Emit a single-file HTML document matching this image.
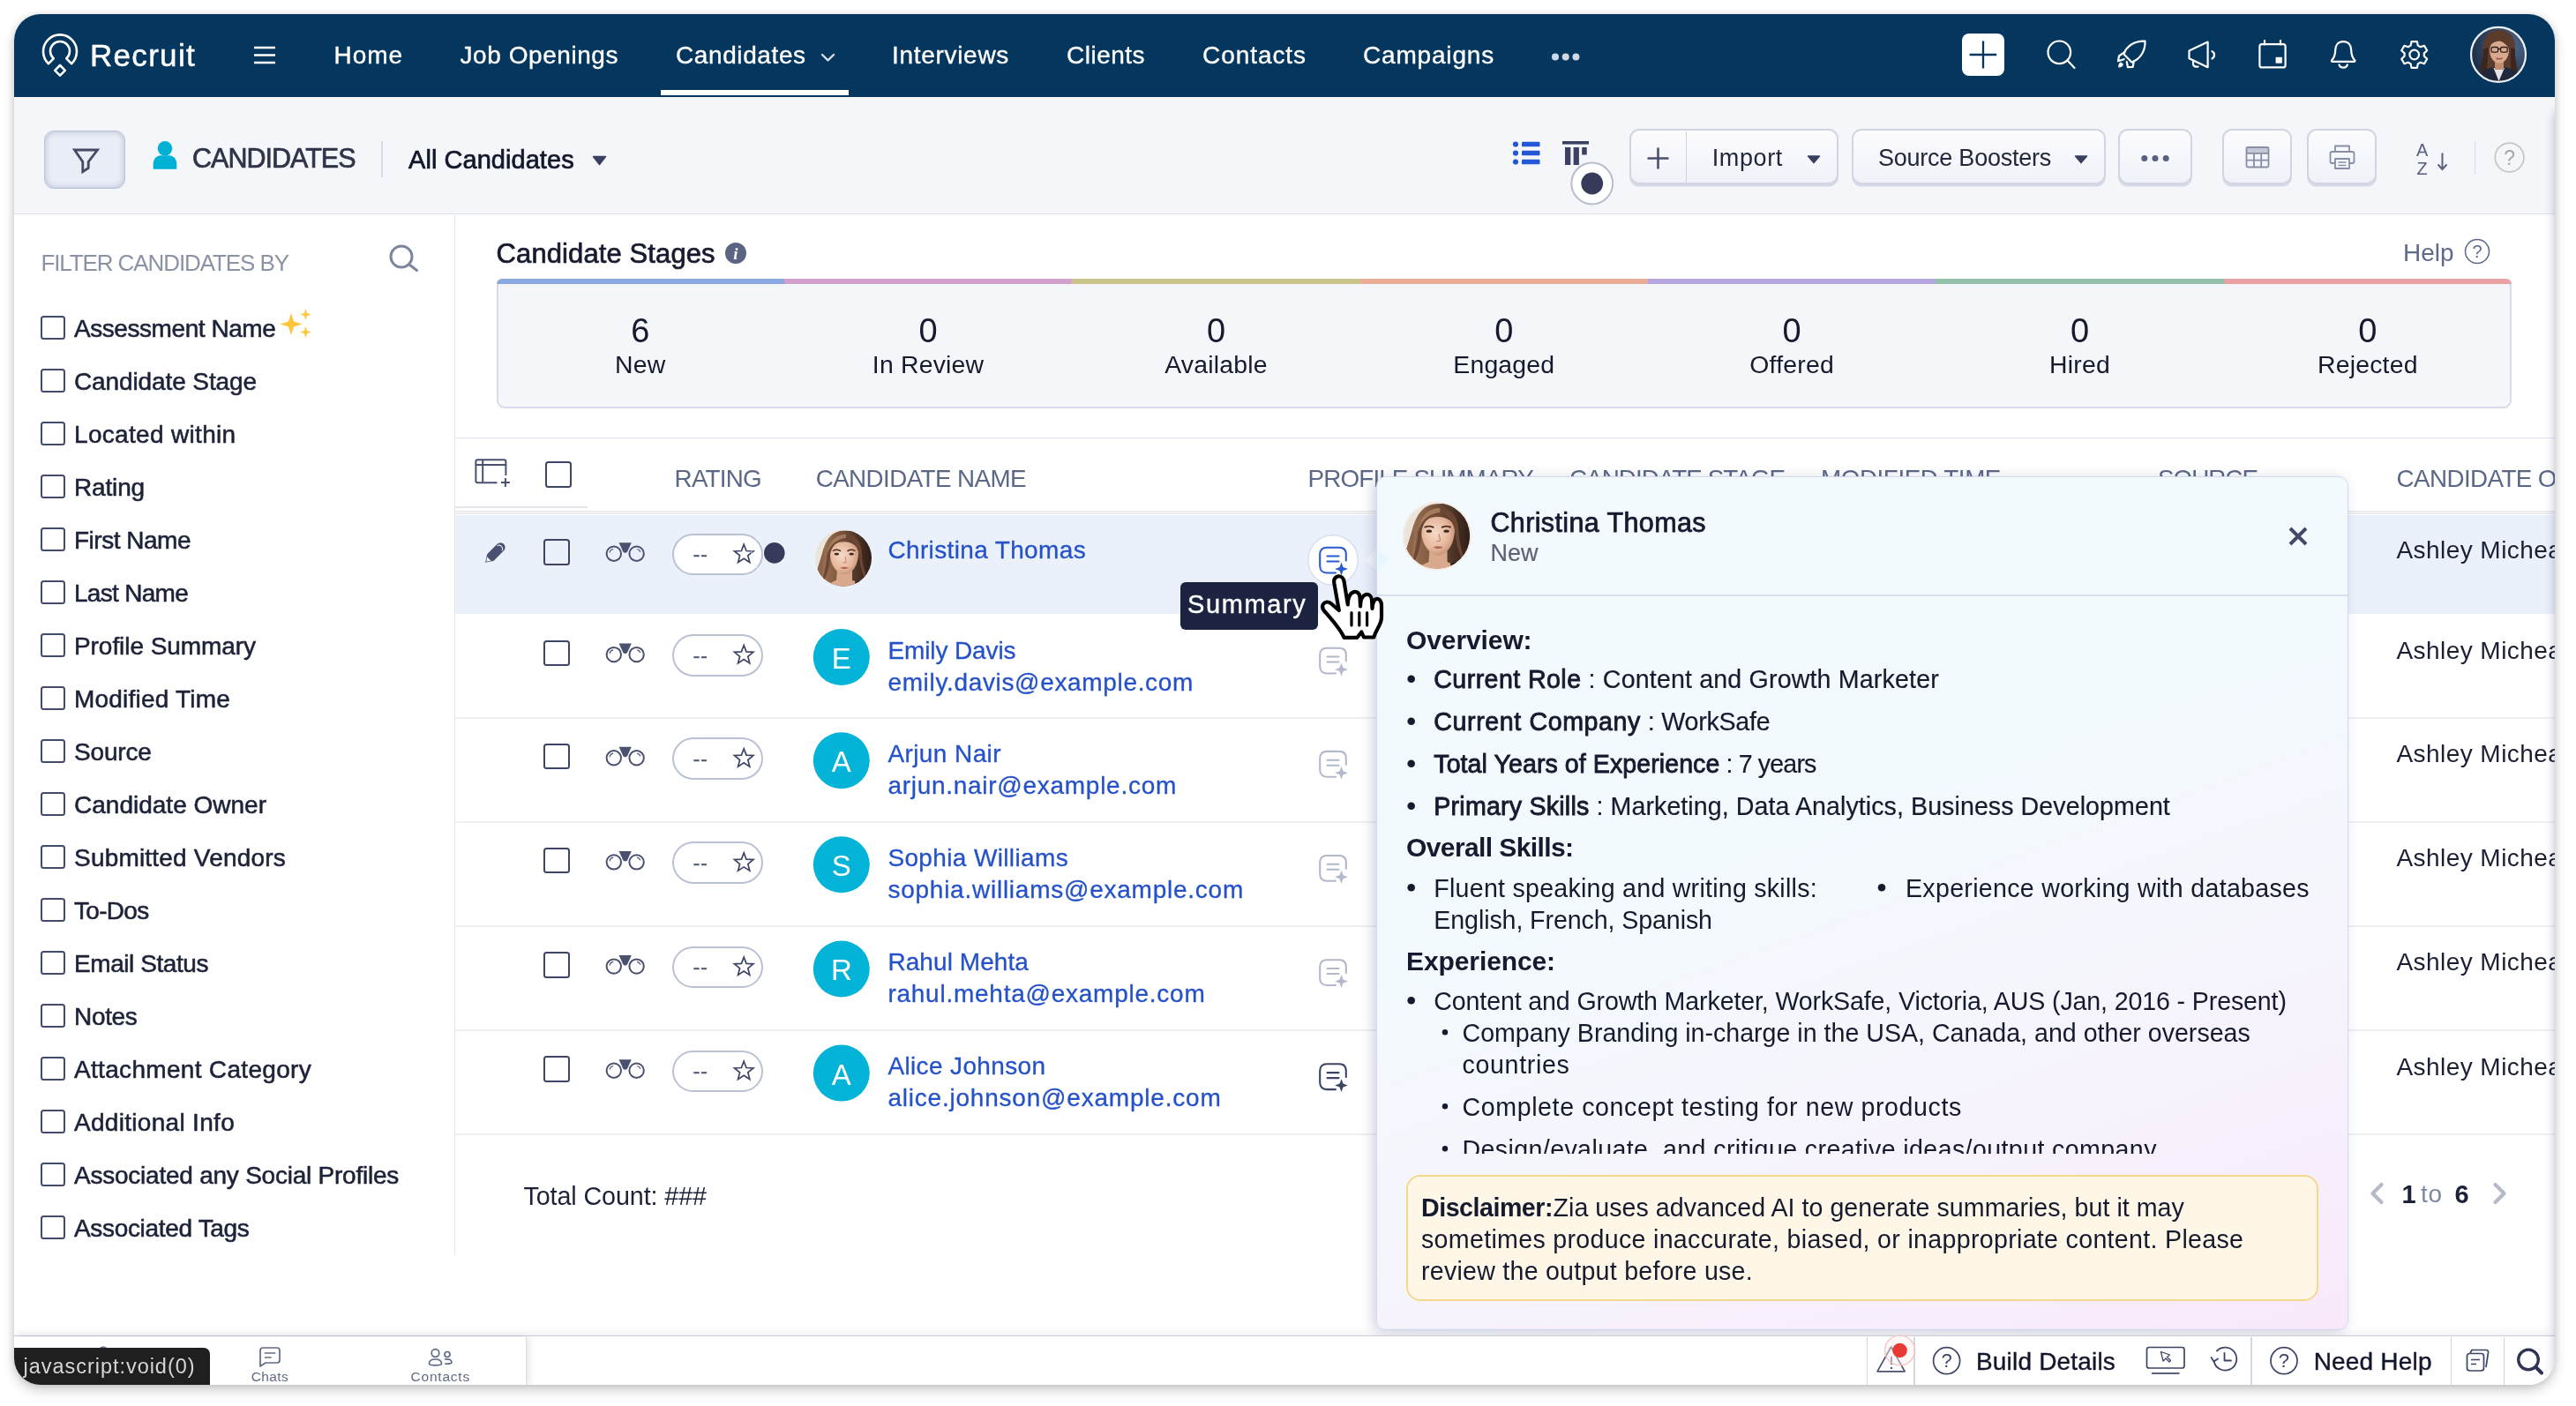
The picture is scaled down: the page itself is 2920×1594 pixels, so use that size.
<!DOCTYPE html>
<html lang="en"><head><meta charset="utf-8"><title>Recruit - Candidates</title>
<style>
html,body{margin:0;padding:0;background:#fff;}
body{width:2920px;height:1594px;overflow:hidden;position:relative;font-family:"Liberation Sans", sans-serif;}
#win{position:absolute;left:16px;top:16px;width:2880px;height:1554px;border-radius:30px;overflow:hidden;background:#fff;}
#shadow{position:absolute;left:16px;top:16px;width:2880px;height:1554px;border-radius:30px;box-shadow:0 6px 14px rgba(0,0,0,.20),0 0 7px rgba(0,0,0,.10);}
#in{position:absolute;left:-16px;top:-16px;width:2920px;height:1594px;will-change:transform;}
div{box-sizing:border-box;}
</style></head>
<body>
<div id="shadow"></div>
<div id="win"><div id="in">
<!-- p_nav -->
<div style="position:absolute;left:16.0px;top:16.0px;width:2880.0px;height:94.0px;box-sizing:border-box;background:#05375e;"></div>
<svg style="position:absolute;left:0;top:0;overflow:visible;pointer-events:none;" width="2920" height="1594" viewBox="0 0 2920 1594">
<g fill="none" stroke="#fff" stroke-width="2.6" stroke-linejoin="round" stroke-linecap="round">
<path d="M55 72.2 A19 19 0 1 1 81 72.2 L75.3 66.3 A11 11 0 1 0 60.7 66.3 Z"/>
<path d="M68 74 L73.8 79.8 L68 85.6 L62.2 79.8 Z"/>
</g></svg>
<div style="position:absolute;top:40.6px;line-height:44px;font-size:35px;color:#ffffff;white-space:pre;left:102.0px;letter-spacing:1.305px;-webkit-text-stroke:0.5px #ffffff;">Recruit</div>
<svg style="position:absolute;left:0;top:0;overflow:visible;pointer-events:none;" width="2920" height="1594" viewBox="0 0 2920 1594"><g stroke="#fff" stroke-width="2.6"><path d="M288 54H312M288 62.5H312M288 71H312"/></g></svg>
<div style="position:absolute;top:44.9px;line-height:35px;font-size:28px;color:#ffffff;white-space:pre;left:378.6px;letter-spacing:0.928px;-webkit-text-stroke:0.35px #ffffff;">Home</div>
<div style="position:absolute;top:44.9px;line-height:35px;font-size:28px;color:#ffffff;white-space:pre;left:521.5px;letter-spacing:0.560px;-webkit-text-stroke:0.35px #ffffff;">Job Openings</div>
<div style="position:absolute;top:44.9px;line-height:35px;font-size:28px;color:#ffffff;white-space:pre;left:766.0px;letter-spacing:0.605px;-webkit-text-stroke:0.35px #ffffff;">Candidates</div>
<div style="position:absolute;top:44.9px;line-height:35px;font-size:28px;color:#ffffff;white-space:pre;left:1011.0px;letter-spacing:0.696px;-webkit-text-stroke:0.35px #ffffff;">Interviews</div>
<div style="position:absolute;top:44.9px;line-height:35px;font-size:28px;color:#ffffff;white-space:pre;left:1209.0px;letter-spacing:0.488px;-webkit-text-stroke:0.35px #ffffff;">Clients</div>
<div style="position:absolute;top:44.9px;line-height:35px;font-size:28px;color:#ffffff;white-space:pre;left:1363.0px;letter-spacing:0.938px;-webkit-text-stroke:0.35px #ffffff;">Contacts</div>
<div style="position:absolute;top:44.9px;line-height:35px;font-size:28px;color:#ffffff;white-space:pre;left:1545.0px;letter-spacing:0.819px;-webkit-text-stroke:0.35px #ffffff;">Campaigns</div>
<svg style="position:absolute;left:0;top:0;overflow:visible;pointer-events:none;" width="2920" height="1594" viewBox="0 0 2920 1594"><path d="M932 62 L938.5 68.3 L945 62" fill="none" stroke="#d9e0ea" stroke-width="2.4" stroke-linecap="round" stroke-linejoin="round"/></svg>
<div style="position:absolute;left:749.0px;top:102.0px;width:213.0px;height:5.5px;box-sizing:border-box;background:#fff;"></div>
<svg style="position:absolute;left:0;top:0;overflow:visible;pointer-events:none;" width="2920" height="1594" viewBox="0 0 2920 1594"><g fill="#cfd8e6"><circle cx="1763" cy="64.5" r="4"/><circle cx="1774.7" cy="64.5" r="4"/><circle cx="1786.4" cy="64.5" r="4"/></g></svg>
<div style="position:absolute;left:2224.0px;top:38.0px;width:48.0px;height:47.8px;box-sizing:border-box;background:#fff;border-radius:8px;"></div>
<svg style="position:absolute;left:0;top:0;overflow:visible;pointer-events:none;" width="2920" height="1594" viewBox="0 0 2920 1594"><path d="M2232.6 62H2263.2M2248 46.6V77.6" stroke="#05375e" stroke-width="2.3"/></svg>
<svg style="position:absolute;left:0;top:0;overflow:visible;pointer-events:none;" width="2920" height="1594" viewBox="0 0 2920 1594"><g fill="none" stroke="#fff" stroke-width="2.2" stroke-linecap="round"><circle cx="2334.3" cy="59.3" r="12.8"/><path d="M2343.5 68.5 L2351.5 77"/></g></svg>
<svg style="position:absolute;left:0;top:0;overflow:visible;pointer-events:none;" width="2920" height="1594" viewBox="0 0 2920 1594"><g fill="none" stroke="#fff" stroke-width="2.2" stroke-linejoin="round" stroke-linecap="round">
<path d="M2431.5 46.6 C2420.5 46 2411 51.5 2407.3 61.2 L2416.3 70.6 C2426 67 2432 58 2431.5 46.6 Z"/>
<path d="M2408.5 58.8 L2402 63.5 L2401 69.3 L2407.6 67.2"/>
<path d="M2418.8 69.5 L2417.6 76 L2412 76.2 L2410.8 70.2"/>
<path d="M2404.8 71.2 C2402.6 71.6 2401.8 73.5 2401.8 75.8 C2404 75.8 2405.8 75 2406.3 72.8" fill="#fff" stroke-width="1.2"/>
</g></svg>
<svg style="position:absolute;left:0;top:0;overflow:visible;pointer-events:none;" width="2920" height="1594" viewBox="0 0 2920 1594"><g fill="none" stroke="#fff" stroke-width="2.2" stroke-linejoin="round" stroke-linecap="round">
<path d="M2481.5 57.5 L2502.6 47.6 V76.2 L2481.5 66.3 Z"/>
<path d="M2486 68.6 V72 Q2486 75.6 2489.5 75.6 H2491.5"/>
<path d="M2507.5 58.2 A4.6 4.6 0 0 1 2507.5 66.4"/>
</g></svg>
<svg style="position:absolute;left:0;top:0;overflow:visible;pointer-events:none;" width="2920" height="1594" viewBox="0 0 2920 1594"><g><rect x="2561.4" y="50.2" width="29.2" height="26.2" rx="2.5" fill="none" stroke="#fff" stroke-width="2.2"/>
<path d="M2567 46.2V50.5M2585 46.2V50.5" stroke="#fff" stroke-width="2.2" stroke-linecap="round"/>
<rect x="2579.6" y="64.8" width="7.2" height="6.9" fill="#fff"/></g></svg>
<svg style="position:absolute;left:0;top:0;overflow:visible;pointer-events:none;" width="2920" height="1594" viewBox="0 0 2920 1594"><g fill="none" stroke="#fff" stroke-width="2.2" stroke-linejoin="round" stroke-linecap="round">
<path d="M2656.2 47.2 C2649.5 47.2 2647.2 52.5 2647.2 57 C2647.2 62.5 2646 65.2 2643 68.6 Q2642.6 69.8 2644 69.8 H2668.4 Q2669.8 69.8 2669.4 68.6 C2666.4 65.2 2665.2 62.5 2665.2 57 C2665.2 52.5 2662.9 47.2 2656.2 47.2 Z"/>
<path d="M2651.6 73.4 C2652.6 77.6 2659.8 77.6 2660.8 73.4"/>
</g></svg>
<svg style="position:absolute;left:0;top:0;overflow:visible;pointer-events:none;" width="2920" height="1594" viewBox="0 0 2920 1594"><path d="M2733.5 47.1 L2739.9 47.1 L2740.8 51.6 L2743.7 53.2 L2748.0 51.8 L2751.2 57.3 L2747.8 60.4 L2747.8 63.6 L2751.2 66.7 L2748.0 72.2 L2743.7 70.8 L2740.8 72.4 L2739.9 76.9 L2733.5 76.9 L2732.6 72.4 L2729.7 70.8 L2725.4 72.2 L2722.2 66.7 L2725.6 63.6 L2725.6 60.4 L2722.2 57.3 L2725.4 51.8 L2729.7 53.2 L2732.6 51.6Z" fill="none" stroke="#fff" stroke-width="2.2" stroke-linejoin="round"/><circle cx="2736.7" cy="62" r="5.3" fill="none" stroke="#fff" stroke-width="2.2"/></svg>
<svg style="position:absolute;left:0;top:0;overflow:visible;pointer-events:none;" width="2920" height="1594" viewBox="0 0 2920 1594"><defs><clipPath id="cpn"><circle cx="2832" cy="61.8" r="30.3"/></clipPath>
<radialGradient id="navbg" cx="70%" cy="35%" r="70%"><stop offset="0" stop-color="#4b6a8e"/><stop offset="1" stop-color="#1d2c44"/></radialGradient></defs>
<g clip-path="url(#cpn)">
<rect x="2799" y="29" width="66" height="66" fill="url(#navbg)"/>
<path d="M2833 34 C2820 34 2814 44 2815 56 C2815.5 66 2810 74 2812 88 L2824 92 L2842 92 L2853 88 C2855 76 2850 68 2851 56 C2852 44 2846 34 2833 34Z" fill="#5a3b2c"/>
<path d="M2815 56 C2815.5 66 2810 74 2812 88 L2820 90 C2818 78 2821 66 2820 54Z" fill="#3c261d"/>
<path d="M2851 56 C2850 68 2855 76 2853 88 L2846 90 C2847 78 2845 66 2846 54Z" fill="#3c261d"/>
<path d="M2806 96 C2807 82 2818 78 2827 76 L2839 76 C2848 78 2859 82 2860 96 Z" fill="#1f283d"/>
<path d="M2826.5 77 L2832.5 92 L2839 77 Z" fill="#e6e4e6"/>
<rect x="2828" y="68" width="10" height="11" fill="#c08c70"/>
<ellipse cx="2833" cy="57.5" rx="10.8" ry="14.2" fill="#d9a98e"/>
<path d="M2821.5 54 C2822 42 2832 41 2836 43 C2842 44 2845 50 2844.5 56 C2841 50 2837 47 2833 46.5 C2828 47 2824 49 2821.5 54Z" fill="#5a3b2c"/>
<g fill="none" stroke="#2a1f1f" stroke-width="1.3"><rect x="2824" y="53.5" width="7.6" height="5.6" rx="1.6"/><rect x="2834.6" y="53.5" width="7.6" height="5.6" rx="1.6"/><path d="M2831.6 55.5H2834.6"/></g>
<path d="M2829.5 66 Q2833 67.6 2836.5 66" stroke="#a0564f" stroke-width="1.4" fill="none"/>
</g>
<circle cx="2832" cy="61.8" r="31" fill="none" stroke="#eef2f6" stroke-width="2.2"/></svg>
<!-- p_toolbar -->
<div style="position:absolute;left:16.0px;top:110.0px;width:2880.0px;height:133.0px;box-sizing:border-box;background:#f5f6fa;border-bottom:1.6px solid #dde2ee;"></div>
<div style="position:absolute;left:50.0px;top:148.0px;width:92.0px;height:66.0px;box-sizing:border-box;background:#e9edf6;border:1.5px solid #b9c2d6;border-radius:11px;box-shadow:inset 0 0 7px rgba(110,125,160,.45);"></div>
<svg style="position:absolute;left:0;top:0;overflow:visible;pointer-events:none;" width="2920" height="1594" viewBox="0 0 2920 1594"><path d="M84.5 170 H110.5 L100.2 183.5 V190.5 L93.8 194.6 V183.5 Z" fill="none" stroke="#444a66" stroke-width="2.8" stroke-linejoin="miter"/></svg>
<svg style="position:absolute;left:0;top:0;overflow:visible;pointer-events:none;" width="2920" height="1594" viewBox="0 0 2920 1594"><g fill="#00b1d6"><circle cx="187" cy="168.3" r="8.3"/><path d="M173.7 191.7 V186 C173.7 180 178 176.3 182 176.3 H192 C196 176.3 200.3 180 200.3 186 V191.7 Q200.3 191.7 198.8 191.7 H175.2 Q173.7 191.7 173.7 191.7 Z"/></g></svg>
<div style="position:absolute;top:160.3px;line-height:38px;font-size:30.5px;color:#2f3449;white-space:pre;left:218.0px;letter-spacing:-0.982px;-webkit-text-stroke:0.7px #2f3449;">CANDIDATES</div>
<div style="position:absolute;left:432.0px;top:160.0px;width:1.6px;height:41.0px;box-sizing:border-box;background:#d9dce6;"></div>
<div style="position:absolute;top:163.3px;line-height:36px;font-size:29px;color:#13172b;white-space:pre;left:463.0px;letter-spacing:0.050px;-webkit-text-stroke:0.7px #13172b;">All Candidates</div>
<svg style="position:absolute;left:0;top:0;overflow:visible;pointer-events:none;" width="2920" height="1594" viewBox="0 0 2920 1594"><path d="M672.5 177.5 L686.5 177.5 L679.5 186.5 Z" fill="#3a4060" stroke="#3a4060" stroke-width="1.5" stroke-linejoin="round"/></svg>
<svg style="position:absolute;left:0;top:0;overflow:visible;pointer-events:none;" width="2920" height="1594" viewBox="0 0 2920 1594"><g fill="#2457d6"><circle cx="1718" cy="163.5" r="3.1"/><rect x="1725" y="160.7" width="20.5" height="5.6" rx="1"/><circle cx="1718" cy="173.5" r="3.1"/><rect x="1725" y="170.7" width="20.5" height="5.6" rx="1"/><circle cx="1718" cy="183.5" r="3.1"/><rect x="1725" y="180.7" width="20.5" height="5.6" rx="1"/></g></svg>
<svg style="position:absolute;left:0;top:0;overflow:visible;pointer-events:none;" width="2920" height="1594" viewBox="0 0 2920 1594"><g fill="#3b4162"><rect x="1771" y="160" width="30" height="3.6"/><rect x="1774" y="167" width="6.3" height="20" /><rect x="1783.6" y="167" width="6.3" height="20"/><rect x="1793.2" y="167" width="5.5" height="8.5"/></g></svg>
<svg style="position:absolute;left:0;top:0;overflow:visible;pointer-events:none;" width="2920" height="1594" viewBox="0 0 2920 1594"><circle cx="1804.7" cy="208" r="23.4" fill="#fff" stroke="#b9bdcc" stroke-width="2"/><circle cx="1804.7" cy="208" r="12.4" fill="#363b5c"/></svg>
<div style="position:absolute;left:1847.0px;top:146.4px;width:237.0px;height:63.1px;box-sizing:border-box;background:linear-gradient(#fcfcfe,#f0f2f9);border:2px solid #d0d5e3;border-radius:11px;box-shadow:0 2.5px 0 #d5d9e6;"></div>
<div style="position:absolute;left:1910.5px;top:148.5px;width:1.5px;height:60.0px;box-sizing:border-box;background:#cdd3e2;"></div>
<svg style="position:absolute;left:0;top:0;overflow:visible;pointer-events:none;" width="2920" height="1594" viewBox="0 0 2920 1594"><path d="M1867.5 179.5H1891.5M1879.5 167.5V191.5" stroke="#4a5070" stroke-width="2.6"/></svg>
<div style="position:absolute;top:161.8px;line-height:34px;font-size:27px;color:#22273b;white-space:pre;left:1940.7px;letter-spacing:0.631px;">Import</div>
<svg style="position:absolute;left:0;top:0;overflow:visible;pointer-events:none;" width="2920" height="1594" viewBox="0 0 2920 1594"><path d="M2049.5 177 L2062.5 177 L2056.0 184.6 Z" fill="#3a4060" stroke="#3a4060" stroke-width="1.5" stroke-linejoin="round"/></svg>
<div style="position:absolute;left:2098.7px;top:146.4px;width:288.3px;height:63.1px;box-sizing:border-box;background:linear-gradient(#fcfcfe,#f0f2f9);border:2px solid #d0d5e3;border-radius:11px;box-shadow:0 2.5px 0 #d5d9e6;"></div>
<div style="position:absolute;top:161.8px;line-height:34px;font-size:27px;color:#22273b;white-space:pre;left:2129.0px;letter-spacing:-0.240px;">Source Boosters</div>
<svg style="position:absolute;left:0;top:0;overflow:visible;pointer-events:none;" width="2920" height="1594" viewBox="0 0 2920 1594"><path d="M2352.5 177 L2365.5 177 L2359.0 184.6 Z" fill="#3a4060" stroke="#3a4060" stroke-width="1.5" stroke-linejoin="round"/></svg>
<div style="position:absolute;left:2401.0px;top:146.4px;width:83.7px;height:63.1px;box-sizing:border-box;background:linear-gradient(#fcfcfe,#f0f2f9);border:2px solid #d0d5e3;border-radius:11px;box-shadow:0 2.5px 0 #d5d9e6;"></div>
<svg style="position:absolute;left:0;top:0;overflow:visible;pointer-events:none;" width="2920" height="1594" viewBox="0 0 2920 1594"><g fill="#596080"><circle cx="2430.8" cy="179.5" r="3.5"/><circle cx="2443" cy="179.5" r="3.5"/><circle cx="2455.2" cy="179.5" r="3.5"/></g></svg>
<div style="position:absolute;left:2519.0px;top:146.4px;width:79.0px;height:63.1px;box-sizing:border-box;background:linear-gradient(#fcfcfe,#f0f2f9);border:2px solid #d0d5e3;border-radius:11px;box-shadow:0 2.5px 0 #d5d9e6;"></div>
<svg style="position:absolute;left:0;top:0;overflow:visible;pointer-events:none;" width="2920" height="1594" viewBox="0 0 2920 1594"><g fill="none" stroke="#878ea6" stroke-width="1.8"><rect x="2546.5" y="167" width="25" height="22.5" rx="1.5"/><path d="M2546.5 173.8H2571.5M2546.5 181.6H2571.5M2555 173.8V189.5M2563.2 173.8V189.5"/></g><rect x="2546.5" y="167" width="25" height="6" fill="#878ea6" fill-opacity=".45"/></svg>
<div style="position:absolute;left:2615.0px;top:146.4px;width:79.0px;height:63.1px;box-sizing:border-box;background:linear-gradient(#fcfcfe,#f0f2f9);border:2px solid #d0d5e3;border-radius:11px;box-shadow:0 2.5px 0 #d5d9e6;"></div>
<svg style="position:absolute;left:0;top:0;overflow:visible;pointer-events:none;" width="2920" height="1594" viewBox="0 0 2920 1594"><g fill="none" stroke="#878ea6" stroke-width="1.8" stroke-linejoin="round"><path d="M2647 172 V165.5 H2663 V172"/><rect x="2641.5" y="172" width="27" height="13" rx="2"/><rect x="2647" y="180" width="16" height="11" fill="#f6f7fb"/><path d="M2650.5 184H2659.5M2650.5 187.5H2659.5" stroke-width="1.5"/></g></svg>
<div style="position:absolute;top:157.5px;line-height:25px;font-size:20px;color:#596080;white-space:pre;left:2739.0px;">A</div>
<div style="position:absolute;top:178.5px;line-height:25px;font-size:20px;color:#596080;white-space:pre;left:2739.5px;">Z</div>
<svg style="position:absolute;left:0;top:0;overflow:visible;pointer-events:none;" width="2920" height="1594" viewBox="0 0 2920 1594"><path d="M2768.5 173.5V191.5M2763.5 186.5L2768.5 192L2773.5 186.5" fill="none" stroke="#596080" stroke-width="2"/></svg>
<div style="position:absolute;left:2804.5px;top:160.4px;width:1.5px;height:38.0px;box-sizing:border-box;background:#d9dce6;"></div>
<svg style="position:absolute;left:0;top:0;overflow:visible;pointer-events:none;" width="2920" height="1594" viewBox="0 0 2920 1594"><circle cx="2844.6" cy="178.5" r="16.3" fill="none" stroke="#c6c6ca" stroke-width="1.7"/></svg>
<div style="position:absolute;top:164.5px;line-height:29px;font-size:23px;color:#a6a6ab;white-space:pre;left:2838.2px;">?</div>
<!-- p_left -->
<div style="position:absolute;left:514.5px;top:243.0px;width:1.5px;height:1180.0px;box-sizing:border-box;background:#e3e6ed;"></div>
<div style="position:absolute;top:281.5px;line-height:32px;font-size:26px;color:#8a92a6;white-space:pre;left:46.4px;letter-spacing:-1.091px;">FILTER CANDIDATES BY</div>
<svg style="position:absolute;left:0;top:0;overflow:visible;pointer-events:none;" width="2920" height="1594" viewBox="0 0 2920 1594"><g fill="none" stroke="#7d869c" stroke-width="3" stroke-linecap="round"><circle cx="455" cy="291" r="12"/><path d="M464 300 L472.5 306.5"/></g></svg>
<div style="position:absolute;left:46.4px;top:357.7px;width:27.6px;height:27.6px;box-sizing:border-box;border:2px solid #434b6c;border-radius:3.5px;background:#fff;"></div>
<div style="position:absolute;top:354.6px;line-height:35px;font-size:28px;color:#1c2238;white-space:pre;left:84.0px;letter-spacing:-0.438px;-webkit-text-stroke:0.55px #1c2238;">Assessment Name</div>
<div style="position:absolute;left:46.4px;top:417.7px;width:27.6px;height:27.6px;box-sizing:border-box;border:2px solid #434b6c;border-radius:3.5px;background:#fff;"></div>
<div style="position:absolute;top:414.6px;line-height:35px;font-size:28px;color:#1c2238;white-space:pre;left:84.0px;letter-spacing:-0.107px;-webkit-text-stroke:0.55px #1c2238;">Candidate Stage</div>
<div style="position:absolute;left:46.4px;top:477.7px;width:27.6px;height:27.6px;box-sizing:border-box;border:2px solid #434b6c;border-radius:3.5px;background:#fff;"></div>
<div style="position:absolute;top:474.6px;line-height:35px;font-size:28px;color:#1c2238;white-space:pre;left:84.0px;letter-spacing:0.321px;-webkit-text-stroke:0.55px #1c2238;">Located within</div>
<div style="position:absolute;left:46.4px;top:537.7px;width:27.6px;height:27.6px;box-sizing:border-box;border:2px solid #434b6c;border-radius:3.5px;background:#fff;"></div>
<div style="position:absolute;top:534.6px;line-height:35px;font-size:28px;color:#1c2238;white-space:pre;left:84.0px;letter-spacing:-0.156px;-webkit-text-stroke:0.55px #1c2238;">Rating</div>
<div style="position:absolute;left:46.4px;top:597.7px;width:27.6px;height:27.6px;box-sizing:border-box;border:2px solid #434b6c;border-radius:3.5px;background:#fff;"></div>
<div style="position:absolute;top:594.6px;line-height:35px;font-size:28px;color:#1c2238;white-space:pre;left:84.0px;letter-spacing:-0.490px;-webkit-text-stroke:0.55px #1c2238;">First Name</div>
<div style="position:absolute;left:46.4px;top:657.7px;width:27.6px;height:27.6px;box-sizing:border-box;border:2px solid #434b6c;border-radius:3.5px;background:#fff;"></div>
<div style="position:absolute;top:654.6px;line-height:35px;font-size:28px;color:#1c2238;white-space:pre;left:84.0px;letter-spacing:-0.710px;-webkit-text-stroke:0.55px #1c2238;">Last Name</div>
<div style="position:absolute;left:46.4px;top:717.7px;width:27.6px;height:27.6px;box-sizing:border-box;border:2px solid #434b6c;border-radius:3.5px;background:#fff;"></div>
<div style="position:absolute;top:714.6px;line-height:35px;font-size:28px;color:#1c2238;white-space:pre;left:84.0px;letter-spacing:-0.063px;-webkit-text-stroke:0.55px #1c2238;">Profile Summary</div>
<div style="position:absolute;left:46.4px;top:777.7px;width:27.6px;height:27.6px;box-sizing:border-box;border:2px solid #434b6c;border-radius:3.5px;background:#fff;"></div>
<div style="position:absolute;top:774.6px;line-height:35px;font-size:28px;color:#1c2238;white-space:pre;left:84.0px;letter-spacing:0.209px;-webkit-text-stroke:0.55px #1c2238;">Modified Time</div>
<div style="position:absolute;left:46.4px;top:837.7px;width:27.6px;height:27.6px;box-sizing:border-box;border:2px solid #434b6c;border-radius:3.5px;background:#fff;"></div>
<div style="position:absolute;top:834.6px;line-height:35px;font-size:28px;color:#1c2238;white-space:pre;left:84.0px;letter-spacing:-0.186px;-webkit-text-stroke:0.55px #1c2238;">Source</div>
<div style="position:absolute;left:46.4px;top:897.7px;width:27.6px;height:27.6px;box-sizing:border-box;border:2px solid #434b6c;border-radius:3.5px;background:#fff;"></div>
<div style="position:absolute;top:894.6px;line-height:35px;font-size:28px;color:#1c2238;white-space:pre;left:84.0px;letter-spacing:0.007px;-webkit-text-stroke:0.55px #1c2238;">Candidate Owner</div>
<div style="position:absolute;left:46.4px;top:957.7px;width:27.6px;height:27.6px;box-sizing:border-box;border:2px solid #434b6c;border-radius:3.5px;background:#fff;"></div>
<div style="position:absolute;top:954.6px;line-height:35px;font-size:28px;color:#1c2238;white-space:pre;left:84.0px;letter-spacing:0.200px;-webkit-text-stroke:0.55px #1c2238;">Submitted Vendors</div>
<div style="position:absolute;left:46.4px;top:1017.7px;width:27.6px;height:27.6px;box-sizing:border-box;border:2px solid #434b6c;border-radius:3.5px;background:#fff;"></div>
<div style="position:absolute;top:1014.6px;line-height:35px;font-size:28px;color:#1c2238;white-space:pre;left:84.0px;letter-spacing:-0.698px;-webkit-text-stroke:0.55px #1c2238;">To-Dos</div>
<div style="position:absolute;left:46.4px;top:1077.7px;width:27.6px;height:27.6px;box-sizing:border-box;border:2px solid #434b6c;border-radius:3.5px;background:#fff;"></div>
<div style="position:absolute;top:1074.6px;line-height:35px;font-size:28px;color:#1c2238;white-space:pre;left:84.0px;letter-spacing:-0.431px;-webkit-text-stroke:0.55px #1c2238;">Email Status</div>
<div style="position:absolute;left:46.4px;top:1137.7px;width:27.6px;height:27.6px;box-sizing:border-box;border:2px solid #434b6c;border-radius:3.5px;background:#fff;"></div>
<div style="position:absolute;top:1134.6px;line-height:35px;font-size:28px;color:#1c2238;white-space:pre;left:84.0px;letter-spacing:-0.329px;-webkit-text-stroke:0.55px #1c2238;">Notes</div>
<div style="position:absolute;left:46.4px;top:1197.7px;width:27.6px;height:27.6px;box-sizing:border-box;border:2px solid #434b6c;border-radius:3.5px;background:#fff;"></div>
<div style="position:absolute;top:1194.6px;line-height:35px;font-size:28px;color:#1c2238;white-space:pre;left:84.0px;letter-spacing:0.315px;-webkit-text-stroke:0.55px #1c2238;">Attachment Category</div>
<div style="position:absolute;left:46.4px;top:1257.7px;width:27.6px;height:27.6px;box-sizing:border-box;border:2px solid #434b6c;border-radius:3.5px;background:#fff;"></div>
<div style="position:absolute;top:1254.6px;line-height:35px;font-size:28px;color:#1c2238;white-space:pre;left:84.0px;letter-spacing:0.303px;-webkit-text-stroke:0.55px #1c2238;">Additional Info</div>
<div style="position:absolute;left:46.4px;top:1317.7px;width:27.6px;height:27.6px;box-sizing:border-box;border:2px solid #434b6c;border-radius:3.5px;background:#fff;"></div>
<div style="position:absolute;top:1314.6px;line-height:35px;font-size:28px;color:#1c2238;white-space:pre;left:84.0px;letter-spacing:-0.236px;-webkit-text-stroke:0.55px #1c2238;">Associated any Social Profiles</div>
<div style="position:absolute;left:46.4px;top:1377.7px;width:27.6px;height:27.6px;box-sizing:border-box;border:2px solid #434b6c;border-radius:3.5px;background:#fff;"></div>
<div style="position:absolute;top:1374.6px;line-height:35px;font-size:28px;color:#1c2238;white-space:pre;left:84.0px;letter-spacing:-0.325px;-webkit-text-stroke:0.55px #1c2238;">Associated Tags</div>
<svg style="position:absolute;left:0;top:0;overflow:visible;pointer-events:none;" width="2920" height="1594" viewBox="0 0 2920 1594"><g fill="#fcc73a"><path d="M330.0 355.0 L333.0 364.5 L342.5 367.5 L333.0 370.5 L330.0 380.0 L327.0 370.5 L317.5 367.5 L327.0 364.5Z"/><path d="M346.5 350.0 L348.1 354.9 L353.0 356.5 L348.1 358.1 L346.5 363.0 L344.9 358.1 L340.0 356.5 L344.9 354.9Z"/><path d="M346.5 370.0 L348.1 374.9 L353.0 376.5 L348.1 378.1 L346.5 383.0 L344.9 378.1 L340.0 376.5 L344.9 374.9Z"/></g></svg>
<!-- p_main -->
<div style="position:absolute;top:267.7px;line-height:39px;font-size:31px;color:#161a2e;white-space:pre;left:562.6px;letter-spacing:0.103px;-webkit-text-stroke:0.7px #161a2e;">Candidate Stages</div>
<svg style="position:absolute;left:0;top:0;overflow:visible;pointer-events:none;" width="2920" height="1594" viewBox="0 0 2920 1594"><circle cx="834" cy="287" r="12" fill="#5c6484"/></svg>
<div style="position:absolute;top:275.5px;line-height:24px;font-size:19px;color:#fff;white-space:pre;left:831.2px;font-weight:700;font-style:italic;font-family:&quot;Liberation Serif&quot;,serif;">i</div>
<div style="position:absolute;top:269.0px;line-height:35px;font-size:28px;color:#5f6a8a;white-space:pre;left:2724.0px;">Help</div>
<svg style="position:absolute;left:0;top:0;overflow:visible;pointer-events:none;" width="2920" height="1594" viewBox="0 0 2920 1594"><circle cx="2808" cy="285" r="13.5" fill="none" stroke="#5f6a8a" stroke-width="1.6"/></svg>
<div style="position:absolute;top:273.0px;line-height:25px;font-size:20px;color:#5f6a8a;white-space:pre;left:2802.6px;">?</div>
<div style="position:absolute;left:562.6px;top:316.0px;width:2284.4px;height:146.8px;box-sizing:border-box;background:#f5f6fa;border:2px solid #d6dcee;border-radius:9px;overflow:hidden;"></div>
<div style="position:absolute;left:562.6px;top:316px;width:2284.4px;height:6px;border-radius:9px 9px 0 0;overflow:hidden;display:flex;"><div style="flex:1;background:#8ca8e0"></div><div style="flex:1;background:#d1a0cd"></div><div style="flex:1;background:#c9c58d"></div><div style="flex:1;background:#ebad97"></div><div style="flex:1;background:#b5a6e0"></div><div style="flex:1;background:#92c0ab"></div><div style="flex:1;background:#eaa2a5"></div></div>
<div style="position:absolute;left:575.8px;width:300px;text-align:center;top:352.5px;line-height:44px;font-size:38px;color:#161a2e;">6</div>
<div style="position:absolute;left:575.8px;width:300px;text-align:center;top:394.5px;line-height:36px;font-size:28.4px;letter-spacing:0.2px;color:#161a2e;">New</div>
<div style="position:absolute;left:902.1px;width:300px;text-align:center;top:352.5px;line-height:44px;font-size:38px;color:#161a2e;">0</div>
<div style="position:absolute;left:902.1px;width:300px;text-align:center;top:394.5px;line-height:36px;font-size:28.4px;letter-spacing:0.2px;color:#161a2e;">In Review</div>
<div style="position:absolute;left:1228.5px;width:300px;text-align:center;top:352.5px;line-height:44px;font-size:38px;color:#161a2e;">0</div>
<div style="position:absolute;left:1228.5px;width:300px;text-align:center;top:394.5px;line-height:36px;font-size:28.4px;letter-spacing:0.2px;color:#161a2e;">Available</div>
<div style="position:absolute;left:1554.8px;width:300px;text-align:center;top:352.5px;line-height:44px;font-size:38px;color:#161a2e;">0</div>
<div style="position:absolute;left:1554.8px;width:300px;text-align:center;top:394.5px;line-height:36px;font-size:28.4px;letter-spacing:0.2px;color:#161a2e;">Engaged</div>
<div style="position:absolute;left:1881.1px;width:300px;text-align:center;top:352.5px;line-height:44px;font-size:38px;color:#161a2e;">0</div>
<div style="position:absolute;left:1881.1px;width:300px;text-align:center;top:394.5px;line-height:36px;font-size:28.4px;letter-spacing:0.2px;color:#161a2e;">Offered</div>
<div style="position:absolute;left:2207.5px;width:300px;text-align:center;top:352.5px;line-height:44px;font-size:38px;color:#161a2e;">0</div>
<div style="position:absolute;left:2207.5px;width:300px;text-align:center;top:394.5px;line-height:36px;font-size:28.4px;letter-spacing:0.2px;color:#161a2e;">Hired</div>
<div style="position:absolute;left:2533.8px;width:300px;text-align:center;top:352.5px;line-height:44px;font-size:38px;color:#161a2e;">0</div>
<div style="position:absolute;left:2533.8px;width:300px;text-align:center;top:394.5px;line-height:36px;font-size:28.4px;letter-spacing:0.2px;color:#161a2e;">Rejected</div>
<div style="position:absolute;left:516.0px;top:495.6px;width:2380.0px;height:1.6px;box-sizing:border-box;background:#dfe4f0;"></div>
<svg style="position:absolute;left:0;top:0;overflow:visible;pointer-events:none;" width="2920" height="1594" viewBox="0 0 2920 1594"><g fill="none" stroke="#4a5070" stroke-width="2"><rect x="539.4" y="521.3" width="34" height="26" rx="2"/><path d="M539.4 527H573.4M547.2 521.3V547.3"/></g><rect x="563.5" y="539" width="16" height="16" fill="#fff"/><path d="M567.9 547.1H577.9M572.9 542.1V552.1" stroke="#4a5070" stroke-width="2"/></svg>
<div style="position:absolute;left:618.0px;top:523.0px;width:30.0px;height:30.0px;box-sizing:border-box;border:2px solid #3d4566;border-radius:3.5px;background:#fff;"></div>
<div style="position:absolute;top:525.3px;line-height:35px;font-size:27.8px;color:#5a6787;white-space:pre;left:764.6px;letter-spacing:-0.760px;">RATING</div>
<div style="position:absolute;top:525.3px;line-height:35px;font-size:27.8px;color:#5a6787;white-space:pre;left:924.7px;letter-spacing:-0.594px;">CANDIDATE NAME</div>
<div style="position:absolute;top:525.3px;line-height:35px;font-size:27.8px;color:#5a6787;white-space:pre;left:1482.6px;letter-spacing:-0.858px;">PROFILE SUMMARY</div>
<div style="position:absolute;top:525.3px;line-height:35px;font-size:27.8px;color:#5a6787;white-space:pre;left:1779.0px;letter-spacing:-0.964px;">CANDIDATE STAGE</div>
<div style="position:absolute;top:525.3px;line-height:35px;font-size:27.8px;color:#5a6787;white-space:pre;left:2064.0px;letter-spacing:-0.425px;">MODIFIED TIME</div>
<div style="position:absolute;top:525.3px;line-height:35px;font-size:27.8px;color:#5a6787;white-space:pre;left:2446.0px;letter-spacing:-0.990px;">SOURCE</div>
<div style="position:absolute;top:525.3px;line-height:35px;font-size:27.8px;color:#5a6787;white-space:pre;left:2716.6px;letter-spacing:-0.6px;">CANDIDATE OWNER</div>
<div style="position:absolute;left:516.0px;top:574.3px;width:150.0px;height:1.5px;box-sizing:border-box;background:#e3e5ea;"></div>
<div style="position:absolute;left:516.0px;top:579.3px;width:2380.0px;height:4.2px;box-sizing:border-box;background:#f1f2f5;border-top:1.5px solid #e4e6ea;border-bottom:1.2px solid #e6e8ee;"></div>
<div style="position:absolute;left:516.0px;top:583.5px;width:2380.0px;height:112.5px;box-sizing:border-box;background:#ebf1fa;"></div>
<div style="position:absolute;left:616.0px;top:611.2px;width:29.7px;height:29.5px;box-sizing:border-box;border:2px solid #3d4566;border-radius:3.5px;"></div>
<svg style="position:absolute;left:0;top:0;overflow:visible;pointer-events:none;" width="2920" height="1594" viewBox="0 0 2920 1594"><g transform="translate(686.4,614.5)"><circle cx="9.4" cy="13.2" r="8.2" fill="none" stroke="#4a5070" stroke-width="2"/><circle cx="35.2" cy="13.2" r="8.2" fill="none" stroke="#4a5070" stroke-width="2"/><path d="M15.2 0.7 H29.4 L24.6 11.2 Q22.3 13.4 20 11.2 Z" fill="#4a5070"/><path d="M4.6 12.2 A5 5 0 0 1 8.8 8 M39.6 11.2 A5 5 0 0 0 35.8 8" fill="none" stroke="#4a5070" stroke-width="1.2"/></g></svg>
<div style="position:absolute;left:762.3px;top:604.6px;width:103.0px;height:47.5px;box-sizing:border-box;border:2px solid #bac1d3;border-radius:24px;background:#fff;"></div>
<div style="position:absolute;top:613.3px;line-height:30px;font-size:24px;color:#5a6080;white-space:pre;left:785.6px;letter-spacing:0.408px;-webkit-text-stroke:0.3px #5a6080;">--</div>
<svg style="position:absolute;left:0;top:0;overflow:visible;pointer-events:none;" width="2920" height="1594" viewBox="0 0 2920 1594"><path d="M843.2 617.2 L846.0 624.5 L853.9 624.9 L847.8 629.9 L849.8 637.5 L843.2 633.2 L836.6 637.5 L838.6 629.9 L832.5 624.9 L840.4 624.5Z" fill="none" stroke="#3d4566" stroke-width="1.7" stroke-linejoin="miter"/></svg>
<div style="position:absolute;top:605.5px;line-height:35px;font-size:28px;color:#2552c8;white-space:pre;left:1006.4px;letter-spacing:0.356px;-webkit-text-stroke:0.3px #2552c8;">Christina Thomas</div>
<div style="position:absolute;top:606.2px;line-height:35px;font-size:28px;color:#1a1f33;white-space:pre;left:2716.4px;letter-spacing:0.45px;">Ashley Micheal</div>
<div style="position:absolute;left:516.0px;top:812.8px;width:2380.0px;height:1.8px;box-sizing:border-box;background:#eef0f4;"></div>
<div style="position:absolute;left:616.0px;top:725.6px;width:29.7px;height:29.5px;box-sizing:border-box;border:2px solid #3d4566;border-radius:3.5px;"></div>
<svg style="position:absolute;left:0;top:0;overflow:visible;pointer-events:none;" width="2920" height="1594" viewBox="0 0 2920 1594"><g transform="translate(686.4,728.9)"><circle cx="9.4" cy="13.2" r="8.2" fill="none" stroke="#4a5070" stroke-width="2"/><circle cx="35.2" cy="13.2" r="8.2" fill="none" stroke="#4a5070" stroke-width="2"/><path d="M15.2 0.7 H29.4 L24.6 11.2 Q22.3 13.4 20 11.2 Z" fill="#4a5070"/><path d="M4.6 12.2 A5 5 0 0 1 8.8 8 M39.6 11.2 A5 5 0 0 0 35.8 8" fill="none" stroke="#4a5070" stroke-width="1.2"/></g></svg>
<div style="position:absolute;left:762.3px;top:719.0px;width:103.0px;height:47.5px;box-sizing:border-box;border:2px solid #bac1d3;border-radius:24px;background:#fff;"></div>
<div style="position:absolute;top:727.7px;line-height:30px;font-size:24px;color:#5a6080;white-space:pre;left:785.6px;letter-spacing:0.408px;-webkit-text-stroke:0.3px #5a6080;">--</div>
<svg style="position:absolute;left:0;top:0;overflow:visible;pointer-events:none;" width="2920" height="1594" viewBox="0 0 2920 1594"><path d="M843.2 731.6 L846.0 738.9 L853.9 739.3 L847.8 744.3 L849.8 751.9 L843.2 747.6 L836.6 751.9 L838.6 744.3 L832.5 739.3 L840.4 738.9Z" fill="none" stroke="#3d4566" stroke-width="1.7" stroke-linejoin="miter"/></svg>
<svg style="position:absolute;left:0;top:0;overflow:visible;pointer-events:none;" width="2920" height="1594" viewBox="0 0 2920 1594"><circle cx="953.8" cy="745.0" r="32" fill="#03b4d8"/></svg>
<div style="position:absolute;left:913.8px;width:80px;text-align:center;top:726.9px;line-height:40px;font-size:33px;color:#fff;">E</div>
<div style="position:absolute;top:719.7px;line-height:35px;font-size:28px;color:#2552c8;white-space:pre;left:1006.4px;letter-spacing:-0.103px;-webkit-text-stroke:0.3px #2552c8;">Emily Davis</div>
<div style="position:absolute;top:755.7px;line-height:35px;font-size:28px;color:#2552c8;white-space:pre;left:1006.4px;letter-spacing:0.664px;-webkit-text-stroke:0.3px #2552c8;">emily.davis@example.com</div>
<svg style="position:absolute;left:0;top:0;overflow:visible;pointer-events:none;" width="2920" height="1594" viewBox="0 0 2920 1594"><g transform="translate(1495,733.5)" fill="none" stroke="#b3b8ca" stroke-width="2.1" stroke-linecap="round"><path d="M19 30 H9 C4 30 1.2 27 1.2 22 V9 C1.2 4 4 1.2 9 1.2 H23 C28 1.2 30.8 4 30.8 9 V16"/><path d="M9.5 11 H22.5 M9.5 17 H22.5"/><path d="M25.5 18.1 L27.5 23.5 L32.9 25.5 L27.5 27.5 L25.5 32.9 L23.5 27.5 L18.1 25.5 L23.5 23.5Z" fill="#b3b8ca" stroke="none"/></g></svg>
<div style="position:absolute;top:719.9px;line-height:35px;font-size:28px;color:#1a1f33;white-space:pre;left:2716.4px;letter-spacing:0.45px;">Ashley Micheal</div>
<div style="position:absolute;left:516.0px;top:930.9px;width:2380.0px;height:1.8px;box-sizing:border-box;background:#eef0f4;"></div>
<div style="position:absolute;left:616.0px;top:842.8px;width:29.7px;height:29.5px;box-sizing:border-box;border:2px solid #3d4566;border-radius:3.5px;"></div>
<svg style="position:absolute;left:0;top:0;overflow:visible;pointer-events:none;" width="2920" height="1594" viewBox="0 0 2920 1594"><g transform="translate(686.4,846.1)"><circle cx="9.4" cy="13.2" r="8.2" fill="none" stroke="#4a5070" stroke-width="2"/><circle cx="35.2" cy="13.2" r="8.2" fill="none" stroke="#4a5070" stroke-width="2"/><path d="M15.2 0.7 H29.4 L24.6 11.2 Q22.3 13.4 20 11.2 Z" fill="#4a5070"/><path d="M4.6 12.2 A5 5 0 0 1 8.8 8 M39.6 11.2 A5 5 0 0 0 35.8 8" fill="none" stroke="#4a5070" stroke-width="1.2"/></g></svg>
<div style="position:absolute;left:762.3px;top:836.2px;width:103.0px;height:47.5px;box-sizing:border-box;border:2px solid #bac1d3;border-radius:24px;background:#fff;"></div>
<div style="position:absolute;top:844.9px;line-height:30px;font-size:24px;color:#5a6080;white-space:pre;left:785.6px;letter-spacing:0.408px;-webkit-text-stroke:0.3px #5a6080;">--</div>
<svg style="position:absolute;left:0;top:0;overflow:visible;pointer-events:none;" width="2920" height="1594" viewBox="0 0 2920 1594"><path d="M843.2 848.8 L846.0 856.1 L853.9 856.5 L847.8 861.5 L849.8 869.1 L843.2 864.8 L836.6 869.1 L838.6 861.5 L832.5 856.5 L840.4 856.1Z" fill="none" stroke="#3d4566" stroke-width="1.7" stroke-linejoin="miter"/></svg>
<svg style="position:absolute;left:0;top:0;overflow:visible;pointer-events:none;" width="2920" height="1594" viewBox="0 0 2920 1594"><circle cx="953.8" cy="862.2" r="32" fill="#03b4d8"/></svg>
<div style="position:absolute;left:913.8px;width:80px;text-align:center;top:844.1px;line-height:40px;font-size:33px;color:#fff;">A</div>
<div style="position:absolute;top:836.9px;line-height:35px;font-size:28px;color:#2552c8;white-space:pre;left:1006.4px;letter-spacing:0.412px;-webkit-text-stroke:0.3px #2552c8;">Arjun Nair</div>
<div style="position:absolute;top:872.9px;line-height:35px;font-size:28px;color:#2552c8;white-space:pre;left:1006.4px;letter-spacing:0.724px;-webkit-text-stroke:0.3px #2552c8;">arjun.nair@example.com</div>
<svg style="position:absolute;left:0;top:0;overflow:visible;pointer-events:none;" width="2920" height="1594" viewBox="0 0 2920 1594"><g transform="translate(1495,850.7)" fill="none" stroke="#b3b8ca" stroke-width="2.1" stroke-linecap="round"><path d="M19 30 H9 C4 30 1.2 27 1.2 22 V9 C1.2 4 4 1.2 9 1.2 H23 C28 1.2 30.8 4 30.8 9 V16"/><path d="M9.5 11 H22.5 M9.5 17 H22.5"/><path d="M25.5 18.1 L27.5 23.5 L32.9 25.5 L27.5 27.5 L25.5 32.9 L23.5 27.5 L18.1 25.5 L23.5 23.5Z" fill="#b3b8ca" stroke="none"/></g></svg>
<div style="position:absolute;top:837.1px;line-height:35px;font-size:28px;color:#1a1f33;white-space:pre;left:2716.4px;letter-spacing:0.45px;">Ashley Micheal</div>
<div style="position:absolute;left:516.0px;top:1049.1px;width:2380.0px;height:1.8px;box-sizing:border-box;background:#eef0f4;"></div>
<div style="position:absolute;left:616.0px;top:960.9px;width:29.7px;height:29.5px;box-sizing:border-box;border:2px solid #3d4566;border-radius:3.5px;"></div>
<svg style="position:absolute;left:0;top:0;overflow:visible;pointer-events:none;" width="2920" height="1594" viewBox="0 0 2920 1594"><g transform="translate(686.4,964.1999999999999)"><circle cx="9.4" cy="13.2" r="8.2" fill="none" stroke="#4a5070" stroke-width="2"/><circle cx="35.2" cy="13.2" r="8.2" fill="none" stroke="#4a5070" stroke-width="2"/><path d="M15.2 0.7 H29.4 L24.6 11.2 Q22.3 13.4 20 11.2 Z" fill="#4a5070"/><path d="M4.6 12.2 A5 5 0 0 1 8.8 8 M39.6 11.2 A5 5 0 0 0 35.8 8" fill="none" stroke="#4a5070" stroke-width="1.2"/></g></svg>
<div style="position:absolute;left:762.3px;top:954.3px;width:103.0px;height:47.5px;box-sizing:border-box;border:2px solid #bac1d3;border-radius:24px;background:#fff;"></div>
<div style="position:absolute;top:963.0px;line-height:30px;font-size:24px;color:#5a6080;white-space:pre;left:785.6px;letter-spacing:0.408px;-webkit-text-stroke:0.3px #5a6080;">--</div>
<svg style="position:absolute;left:0;top:0;overflow:visible;pointer-events:none;" width="2920" height="1594" viewBox="0 0 2920 1594"><path d="M843.2 966.9 L846.0 974.2 L853.9 974.6 L847.8 979.6 L849.8 987.2 L843.2 982.9 L836.6 987.2 L838.6 979.6 L832.5 974.6 L840.4 974.2Z" fill="none" stroke="#3d4566" stroke-width="1.7" stroke-linejoin="miter"/></svg>
<svg style="position:absolute;left:0;top:0;overflow:visible;pointer-events:none;" width="2920" height="1594" viewBox="0 0 2920 1594"><circle cx="953.8" cy="980.3" r="32" fill="#03b4d8"/></svg>
<div style="position:absolute;left:913.8px;width:80px;text-align:center;top:962.1999999999999px;line-height:40px;font-size:33px;color:#fff;">S</div>
<div style="position:absolute;top:955.0px;line-height:35px;font-size:28px;color:#2552c8;white-space:pre;left:1006.4px;letter-spacing:0.362px;-webkit-text-stroke:0.3px #2552c8;">Sophia Williams</div>
<div style="position:absolute;top:991.0px;line-height:35px;font-size:28px;color:#2552c8;white-space:pre;left:1006.4px;letter-spacing:0.755px;-webkit-text-stroke:0.3px #2552c8;">sophia.williams@example.com</div>
<svg style="position:absolute;left:0;top:0;overflow:visible;pointer-events:none;" width="2920" height="1594" viewBox="0 0 2920 1594"><g transform="translate(1495,968.8)" fill="none" stroke="#b3b8ca" stroke-width="2.1" stroke-linecap="round"><path d="M19 30 H9 C4 30 1.2 27 1.2 22 V9 C1.2 4 4 1.2 9 1.2 H23 C28 1.2 30.8 4 30.8 9 V16"/><path d="M9.5 11 H22.5 M9.5 17 H22.5"/><path d="M25.5 18.1 L27.5 23.5 L32.9 25.5 L27.5 27.5 L25.5 32.9 L23.5 27.5 L18.1 25.5 L23.5 23.5Z" fill="#b3b8ca" stroke="none"/></g></svg>
<div style="position:absolute;top:955.2px;line-height:35px;font-size:28px;color:#1a1f33;white-space:pre;left:2716.4px;letter-spacing:0.45px;">Ashley Micheal</div>
<div style="position:absolute;left:516.0px;top:1167.2px;width:2380.0px;height:1.8px;box-sizing:border-box;background:#eef0f4;"></div>
<div style="position:absolute;left:616.0px;top:1079.1px;width:29.7px;height:29.5px;box-sizing:border-box;border:2px solid #3d4566;border-radius:3.5px;"></div>
<svg style="position:absolute;left:0;top:0;overflow:visible;pointer-events:none;" width="2920" height="1594" viewBox="0 0 2920 1594"><g transform="translate(686.4,1082.3999999999999)"><circle cx="9.4" cy="13.2" r="8.2" fill="none" stroke="#4a5070" stroke-width="2"/><circle cx="35.2" cy="13.2" r="8.2" fill="none" stroke="#4a5070" stroke-width="2"/><path d="M15.2 0.7 H29.4 L24.6 11.2 Q22.3 13.4 20 11.2 Z" fill="#4a5070"/><path d="M4.6 12.2 A5 5 0 0 1 8.8 8 M39.6 11.2 A5 5 0 0 0 35.8 8" fill="none" stroke="#4a5070" stroke-width="1.2"/></g></svg>
<div style="position:absolute;left:762.3px;top:1072.5px;width:103.0px;height:47.5px;box-sizing:border-box;border:2px solid #bac1d3;border-radius:24px;background:#fff;"></div>
<div style="position:absolute;top:1081.2px;line-height:30px;font-size:24px;color:#5a6080;white-space:pre;left:785.6px;letter-spacing:0.408px;-webkit-text-stroke:0.3px #5a6080;">--</div>
<svg style="position:absolute;left:0;top:0;overflow:visible;pointer-events:none;" width="2920" height="1594" viewBox="0 0 2920 1594"><path d="M843.2 1085.1 L846.0 1092.4 L853.9 1092.8 L847.8 1097.8 L849.8 1105.4 L843.2 1101.1 L836.6 1105.4 L838.6 1097.8 L832.5 1092.8 L840.4 1092.4Z" fill="none" stroke="#3d4566" stroke-width="1.7" stroke-linejoin="miter"/></svg>
<svg style="position:absolute;left:0;top:0;overflow:visible;pointer-events:none;" width="2920" height="1594" viewBox="0 0 2920 1594"><circle cx="953.8" cy="1098.4999999999998" r="32" fill="#03b4d8"/></svg>
<div style="position:absolute;left:913.8px;width:80px;text-align:center;top:1080.3999999999999px;line-height:40px;font-size:33px;color:#fff;">R</div>
<div style="position:absolute;top:1073.2px;line-height:35px;font-size:28px;color:#2552c8;white-space:pre;left:1006.4px;letter-spacing:0.077px;-webkit-text-stroke:0.3px #2552c8;">Rahul Mehta</div>
<div style="position:absolute;top:1109.2px;line-height:35px;font-size:28px;color:#2552c8;white-space:pre;left:1006.4px;letter-spacing:0.752px;-webkit-text-stroke:0.3px #2552c8;">rahul.mehta@example.com</div>
<svg style="position:absolute;left:0;top:0;overflow:visible;pointer-events:none;" width="2920" height="1594" viewBox="0 0 2920 1594"><g transform="translate(1495,1087.0)" fill="none" stroke="#b3b8ca" stroke-width="2.1" stroke-linecap="round"><path d="M19 30 H9 C4 30 1.2 27 1.2 22 V9 C1.2 4 4 1.2 9 1.2 H23 C28 1.2 30.8 4 30.8 9 V16"/><path d="M9.5 11 H22.5 M9.5 17 H22.5"/><path d="M25.5 18.1 L27.5 23.5 L32.9 25.5 L27.5 27.5 L25.5 32.9 L23.5 27.5 L18.1 25.5 L23.5 23.5Z" fill="#b3b8ca" stroke="none"/></g></svg>
<div style="position:absolute;top:1073.4px;line-height:35px;font-size:28px;color:#1a1f33;white-space:pre;left:2716.4px;letter-spacing:0.45px;">Ashley Micheal</div>
<div style="position:absolute;left:516.0px;top:1285.0px;width:2380.0px;height:1.8px;box-sizing:border-box;background:#eef0f4;"></div>
<div style="position:absolute;left:616.0px;top:1197.2px;width:29.7px;height:29.5px;box-sizing:border-box;border:2px solid #3d4566;border-radius:3.5px;"></div>
<svg style="position:absolute;left:0;top:0;overflow:visible;pointer-events:none;" width="2920" height="1594" viewBox="0 0 2920 1594"><g transform="translate(686.4,1200.4999999999998)"><circle cx="9.4" cy="13.2" r="8.2" fill="none" stroke="#4a5070" stroke-width="2"/><circle cx="35.2" cy="13.2" r="8.2" fill="none" stroke="#4a5070" stroke-width="2"/><path d="M15.2 0.7 H29.4 L24.6 11.2 Q22.3 13.4 20 11.2 Z" fill="#4a5070"/><path d="M4.6 12.2 A5 5 0 0 1 8.8 8 M39.6 11.2 A5 5 0 0 0 35.8 8" fill="none" stroke="#4a5070" stroke-width="1.2"/></g></svg>
<div style="position:absolute;left:762.3px;top:1190.6px;width:103.0px;height:47.5px;box-sizing:border-box;border:2px solid #bac1d3;border-radius:24px;background:#fff;"></div>
<div style="position:absolute;top:1199.3px;line-height:30px;font-size:24px;color:#5a6080;white-space:pre;left:785.6px;letter-spacing:0.408px;-webkit-text-stroke:0.3px #5a6080;">--</div>
<svg style="position:absolute;left:0;top:0;overflow:visible;pointer-events:none;" width="2920" height="1594" viewBox="0 0 2920 1594"><path d="M843.2 1203.2 L846.0 1210.5 L853.9 1210.9 L847.8 1215.9 L849.8 1223.5 L843.2 1219.2 L836.6 1223.5 L838.6 1215.9 L832.5 1210.9 L840.4 1210.5Z" fill="none" stroke="#3d4566" stroke-width="1.7" stroke-linejoin="miter"/></svg>
<svg style="position:absolute;left:0;top:0;overflow:visible;pointer-events:none;" width="2920" height="1594" viewBox="0 0 2920 1594"><circle cx="953.8" cy="1216.5999999999997" r="32" fill="#03b4d8"/></svg>
<div style="position:absolute;left:913.8px;width:80px;text-align:center;top:1198.4999999999998px;line-height:40px;font-size:33px;color:#fff;">A</div>
<div style="position:absolute;top:1191.3px;line-height:35px;font-size:28px;color:#2552c8;white-space:pre;left:1006.4px;letter-spacing:0.367px;-webkit-text-stroke:0.3px #2552c8;">Alice Johnson</div>
<div style="position:absolute;top:1227.3px;line-height:35px;font-size:28px;color:#2552c8;white-space:pre;left:1006.4px;letter-spacing:0.789px;-webkit-text-stroke:0.3px #2552c8;">alice.johnson@example.com</div>
<svg style="position:absolute;left:0;top:0;overflow:visible;pointer-events:none;" width="2920" height="1594" viewBox="0 0 2920 1594"><g transform="translate(1495,1205.1)" fill="none" stroke="#3d4566" stroke-width="2.1" stroke-linecap="round"><path d="M19 30 H9 C4 30 1.2 27 1.2 22 V9 C1.2 4 4 1.2 9 1.2 H23 C28 1.2 30.8 4 30.8 9 V16"/><path d="M9.5 11 H22.5 M9.5 17 H22.5"/><path d="M25.5 18.1 L27.5 23.5 L32.9 25.5 L27.5 27.5 L25.5 32.9 L23.5 27.5 L18.1 25.5 L23.5 23.5Z" fill="#3d4566" stroke="none"/></g></svg>
<div style="position:absolute;top:1191.5px;line-height:35px;font-size:28px;color:#1a1f33;white-space:pre;left:2716.4px;letter-spacing:0.45px;">Ashley Micheal</div>
<svg style="position:absolute;left:0;top:0;overflow:visible;pointer-events:none;" width="2920" height="1594" viewBox="0 0 2920 1594"><g transform="translate(548,616.5) rotate(45 12 12) scale(0.96)"><path d="M6.5 1.2 A5.5 5.5 0 0 1 17.5 1.2 V18 L12 26.5 L6.5 18 Z" fill="#4a5070"/><path d="M8.8 20.3 L12 25 L15.2 20.3Z" fill="#ebf1fa"/><path d="M7.9 2.6 A4.3 4.3 0 0 1 16.1 2.6" fill="none" stroke="#dfe6f3" stroke-width="1.1"/></g></svg>
<svg style="position:absolute;left:0;top:0;overflow:visible;pointer-events:none;" width="2920" height="1594" viewBox="0 0 2920 1594"><circle cx="877.8" cy="626.9" r="26" fill="none" stroke="#edf0f7" stroke-width="0.8"/><circle cx="877.8" cy="626.9" r="12.4" fill="#363b5c" stroke="#f6f8fd" stroke-width="1.2"/></svg>
<svg style="position:absolute;left:0;top:0;overflow:visible;pointer-events:none;" width="2920" height="1594" viewBox="0 0 2920 1594"><defs><clipPath id="cpa"><circle cx="956" cy="632.8" r="32"/></clipPath><radialGradient id="cpag" cx="42%" cy="42%" r="62%"><stop offset="0" stop-color="#f6dac7"/><stop offset="0.65" stop-color="#e6b89d"/><stop offset="1" stop-color="#c48f74"/></radialGradient><linearGradient id="cpah" x1="0" y1="0" x2="1" y2="0"><stop offset="0" stop-color="#a67c5e"/><stop offset="0.4" stop-color="#80593f"/><stop offset="0.75" stop-color="#4a3125"/><stop offset="1" stop-color="#2c1b15"/></linearGradient></defs><g clip-path="url(#cpa)"><g transform="translate(956,632.8) scale(1.0)"><rect x="-34" y="-34" width="68" height="68" fill="#ebe4da"/><path d="M2 -31 C-10 -32 -18 -24 -22 -12 C-25 -2 -28 10 -33 22 L-33 34 L34 34 L34 -18 C28 -28 14 -32 2 -31Z" fill="url(#cpah)"/><path d="M-22 -12 C-21 4 -25 18 -25 34 L-33 34 L-33 22 C-28 10 -25 -2 -22 -12Z" fill="#8d6549"/><path d="M-7 12 L-8 25 C-14 28 -20 30 -22 36 L24 36 C21 29 15 27 10 25 L10 12Z" fill="#d9a98e"/><path d="M34 36 L34 27 C28 24 18 25 13 27 C14 30 13 33 11 36Z" fill="#1c1717"/><path d="M-34 36 L-34 33 C-28 29 -19 28 -14 29 C-13 31 -12 34 -10 36Z" fill="#241c1a"/><path d="M-15.2 -5 C-16.5 -23 18.5 -23 17.2 -5 C16.6 8 10.5 17.5 1.5 19 C-8 17.5 -14.6 8 -15.2 -5Z" fill="url(#cpag)"/><path d="M3 -27 C-9 -27 -18 -18 -18.5 -3 C-19 8 -22 17 -24 28 C-17 19 -15.5 6 -14.8 -5 C-13 -14 -7 -20 3 -22 C11 -20 16 -13 17.5 -5 C18.5 6 20 16 27 27 C25 15 21 6 21 -4 C21 -18 14 -27 3 -27Z" fill="#6a4633"/><path d="M3 -27 C-9 -27 -18 -18 -18.5 -3 C-16 -14 -9 -21 3 -23Z" fill="#a27a5c"/><g stroke="#4a2f25" stroke-width="1.5" stroke-linecap="round" fill="none"><path d="M-11.5 -8.5 Q-7.5 -10.5 -3.5 -8.3"/><path d="M5 -8.3 Q9 -10.5 13 -8.5"/></g><g fill="#3a2a26"><ellipse cx="-7.6" cy="-4.6" rx="2.7" ry="1.4"/><ellipse cx="9.2" cy="-4.6" rx="2.7" ry="1.4"/></g><path d="M2 -2 L3.2 4.2 Q1.8 5.8 -0.4 4.8" stroke="#c38c72" stroke-width="1.1" fill="none"/><path d="M-3.8 10.8 Q1 9.2 6 10.8 Q1 14 -3.8 10.8Z" fill="#b4645b"/></g></g></svg>
<svg style="position:absolute;left:0;top:0;overflow:visible;pointer-events:none;" width="2920" height="1594" viewBox="0 0 2920 1594"><circle cx="1511" cy="635" r="28.3" fill="#fff" stroke="#d9dff0" stroke-width="1.6"/><g transform="translate(1495,619.5)" fill="none" stroke="#2a5bd0" stroke-width="2.1" stroke-linecap="round"><path d="M19 30 H9 C4 30 1.2 27 1.2 22 V9 C1.2 4 4 1.2 9 1.2 H23 C28 1.2 30.8 4 30.8 9 V16"/><path d="M9.5 11 H22.5 M9.5 17 H22.5"/><path d="M25.5 18.1 L27.5 23.5 L32.9 25.5 L27.5 27.5 L25.5 32.9 L23.5 27.5 L18.1 25.5 L23.5 23.5Z" fill="#2a5bd0" stroke="none"/></g></svg>
<div style="position:absolute;top:1337.5px;line-height:36px;font-size:28.7px;color:#1c2238;white-space:pre;left:593.5px;letter-spacing:-0.094px;">Total Count: ###</div>
<svg style="position:absolute;left:0;top:0;overflow:visible;pointer-events:none;" width="2920" height="1594" viewBox="0 0 2920 1594"><g fill="none" stroke="#b5b9c8" stroke-width="4.2" stroke-linecap="round" stroke-linejoin="round"><path d="M2699.5 1343 L2689.5 1353 L2699.5 1363"/><path d="M2828.5 1343 L2838.5 1353 L2828.5 1363"/></g></svg>
<div style="position:absolute;top:1335.5px;line-height:36px;font-size:29px;color:#1c2238;white-space:pre;left:2722.5px;font-weight:700;">1</div>
<div style="position:absolute;top:1336.0px;line-height:35px;font-size:28px;color:#7f88a0;white-space:pre;left:2744.0px;letter-spacing:0.8px;">to</div>
<div style="position:absolute;top:1335.5px;line-height:36px;font-size:29px;color:#1c2238;white-space:pre;left:2782.5px;font-weight:700;">6</div>
<!-- p_popup -->
<svg style="position:absolute;left:0;top:0;overflow:visible;pointer-events:none;" width="2920" height="1594" viewBox="0 0 2920 1594"><path d="M1547.5 634.5 L1561.5 620.5 L1575.5 634.5 L1561.5 648.5Z" fill="#f4fafe" stroke="#e9eef8" stroke-width="0.8"/></svg>
<div style="position:absolute;left:1559.8px;top:540.2px;width:1102.0px;height:967.8px;box-sizing:border-box;border:1.6px solid #d3daee;border-radius:11px;background:linear-gradient(160deg,#f3fafe 0%,#f3fafe 42%,#f6f4fc 68%,#f9e9fb 100%);box-shadow:-4px 2px 14px rgba(70,80,130,.25);"></div>
<svg style="position:absolute;left:0;top:0;overflow:visible;pointer-events:none;" width="2920" height="1594" viewBox="0 0 2920 1594"><path d="M1561.6 620.8 L1575.5 634.5 L1561.6 648.2Z" fill="#e8f6fe"/></svg>
<svg style="position:absolute;left:0;top:0;overflow:visible;pointer-events:none;" width="2920" height="1594" viewBox="0 0 2920 1594"><defs><clipPath id="cpb"><circle cx="1628.8" cy="607.6" r="37.5"/></clipPath><radialGradient id="cpbg" cx="42%" cy="42%" r="62%"><stop offset="0" stop-color="#f6dac7"/><stop offset="0.65" stop-color="#e6b89d"/><stop offset="1" stop-color="#c48f74"/></radialGradient><linearGradient id="cpbh" x1="0" y1="0" x2="1" y2="0"><stop offset="0" stop-color="#a67c5e"/><stop offset="0.4" stop-color="#80593f"/><stop offset="0.75" stop-color="#4a3125"/><stop offset="1" stop-color="#2c1b15"/></linearGradient></defs><g clip-path="url(#cpb)"><g transform="translate(1628.8,607.6) scale(1.171875)"><rect x="-34" y="-34" width="68" height="68" fill="#ebe4da"/><path d="M2 -31 C-10 -32 -18 -24 -22 -12 C-25 -2 -28 10 -33 22 L-33 34 L34 34 L34 -18 C28 -28 14 -32 2 -31Z" fill="url(#cpbh)"/><path d="M-22 -12 C-21 4 -25 18 -25 34 L-33 34 L-33 22 C-28 10 -25 -2 -22 -12Z" fill="#8d6549"/><path d="M-7 12 L-8 25 C-14 28 -20 30 -22 36 L24 36 C21 29 15 27 10 25 L10 12Z" fill="#d9a98e"/><path d="M34 36 L34 27 C28 24 18 25 13 27 C14 30 13 33 11 36Z" fill="#1c1717"/><path d="M-34 36 L-34 33 C-28 29 -19 28 -14 29 C-13 31 -12 34 -10 36Z" fill="#241c1a"/><path d="M-15.2 -5 C-16.5 -23 18.5 -23 17.2 -5 C16.6 8 10.5 17.5 1.5 19 C-8 17.5 -14.6 8 -15.2 -5Z" fill="url(#cpbg)"/><path d="M3 -27 C-9 -27 -18 -18 -18.5 -3 C-19 8 -22 17 -24 28 C-17 19 -15.5 6 -14.8 -5 C-13 -14 -7 -20 3 -22 C11 -20 16 -13 17.5 -5 C18.5 6 20 16 27 27 C25 15 21 6 21 -4 C21 -18 14 -27 3 -27Z" fill="#6a4633"/><path d="M3 -27 C-9 -27 -18 -18 -18.5 -3 C-16 -14 -9 -21 3 -23Z" fill="#a27a5c"/><g stroke="#4a2f25" stroke-width="1.5" stroke-linecap="round" fill="none"><path d="M-11.5 -8.5 Q-7.5 -10.5 -3.5 -8.3"/><path d="M5 -8.3 Q9 -10.5 13 -8.5"/></g><g fill="#3a2a26"><ellipse cx="-7.6" cy="-4.6" rx="2.7" ry="1.4"/><ellipse cx="9.2" cy="-4.6" rx="2.7" ry="1.4"/></g><path d="M2 -2 L3.2 4.2 Q1.8 5.8 -0.4 4.8" stroke="#c38c72" stroke-width="1.1" fill="none"/><path d="M-3.8 10.8 Q1 9.2 6 10.8 Q1 14 -3.8 10.8Z" fill="#b4645b"/></g></g><circle cx="1628.8" cy="607.6" r="38.3" fill="none" stroke="#f4ebe6" stroke-width="1.6"/></svg>
<div style="position:absolute;top:573.3px;line-height:38px;font-size:30.5px;color:#161a2e;white-space:pre;left:1689.4px;letter-spacing:0.385px;-webkit-text-stroke:0.75px #161a2e;">Christina Thomas</div>
<div style="position:absolute;top:610.0px;line-height:34px;font-size:27px;color:#5d6377;white-space:pre;left:1689.4px;letter-spacing:0.029px;-webkit-text-stroke:0.2px #5d6377;">New</div>
<svg style="position:absolute;left:0;top:0;overflow:visible;pointer-events:none;" width="2920" height="1594" viewBox="0 0 2920 1594"><path d="M2596 599 L2614 617 M2614 599 L2596 617" stroke="#434968" stroke-width="3.9" stroke-linecap="butt"/></svg>
<div style="position:absolute;left:1560.8px;top:674.3px;width:1100.0px;height:1.7px;box-sizing:border-box;background:#d9dff0;"></div>
<div style="position:absolute;top:706.5px;line-height:38px;font-size:30px;color:#161a2e;white-space:pre;left:1594.0px;font-weight:700;letter-spacing:-0.101px;">Overview:</div>
<svg style="position:absolute;left:0;top:0;overflow:visible;pointer-events:none;" width="2920" height="1594" viewBox="0 0 2920 1594"><circle cx="1599.7" cy="769.7" r="4.3" fill="#161a2e"/></svg>
<div style="position:absolute;top:752.0px;line-height:36px;font-size:28.6px;color:#161a2e;white-space:pre;left:1625.3px;letter-spacing:0.422px;-webkit-text-stroke:0.85px #161a2e;">Current Role</div>
<div style="position:absolute;top:752.0px;line-height:36px;font-size:28.6px;color:#161a2e;white-space:pre;left:1792.5px;letter-spacing:0.164px;-webkit-text-stroke:0.2px #161a2e;"> : Content and Growth Marketer</div>
<svg style="position:absolute;left:0;top:0;overflow:visible;pointer-events:none;" width="2920" height="1594" viewBox="0 0 2920 1594"><circle cx="1599.7" cy="817.7" r="4.3" fill="#161a2e"/></svg>
<div style="position:absolute;top:800.0px;line-height:36px;font-size:28.6px;color:#161a2e;white-space:pre;left:1625.3px;letter-spacing:0.599px;-webkit-text-stroke:0.85px #161a2e;">Current Company</div>
<div style="position:absolute;top:800.0px;line-height:36px;font-size:28.6px;color:#161a2e;white-space:pre;left:1860.0px;letter-spacing:-0.216px;-webkit-text-stroke:0.2px #161a2e;"> : WorkSafe</div>
<svg style="position:absolute;left:0;top:0;overflow:visible;pointer-events:none;" width="2920" height="1594" viewBox="0 0 2920 1594"><circle cx="1599.7" cy="865.7" r="4.3" fill="#161a2e"/></svg>
<div style="position:absolute;top:848.0px;line-height:36px;font-size:28.6px;color:#161a2e;white-space:pre;left:1625.3px;letter-spacing:0.058px;-webkit-text-stroke:0.85px #161a2e;">Total Years of Experience</div>
<div style="position:absolute;top:848.0px;line-height:36px;font-size:28.6px;color:#161a2e;white-space:pre;left:1949.5px;letter-spacing:-0.862px;-webkit-text-stroke:0.2px #161a2e;"> : 7 years</div>
<svg style="position:absolute;left:0;top:0;overflow:visible;pointer-events:none;" width="2920" height="1594" viewBox="0 0 2920 1594"><circle cx="1599.7" cy="913.7" r="4.3" fill="#161a2e"/></svg>
<div style="position:absolute;top:896.0px;line-height:36px;font-size:28.6px;color:#161a2e;white-space:pre;left:1625.3px;letter-spacing:0.215px;-webkit-text-stroke:0.85px #161a2e;">Primary Skills</div>
<div style="position:absolute;top:896.0px;line-height:36px;font-size:28.6px;color:#161a2e;white-space:pre;left:1801.5px;letter-spacing:0.072px;-webkit-text-stroke:0.2px #161a2e;"> : Marketing, Data Analytics, Business Development</div>
<div style="position:absolute;top:942.0px;line-height:38px;font-size:30px;color:#161a2e;white-space:pre;left:1594.0px;font-weight:700;letter-spacing:-0.596px;">Overall Skills:</div>
<svg style="position:absolute;left:0;top:0;overflow:visible;pointer-events:none;" width="2920" height="1594" viewBox="0 0 2920 1594"><circle cx="1599.7" cy="1006.2" r="4.3" fill="#161a2e"/></svg>
<div style="position:absolute;top:988.5px;line-height:36px;font-size:28.6px;color:#161a2e;white-space:pre;left:1625.3px;letter-spacing:0.248px;">Fluent speaking and writing skills:</div>
<div style="position:absolute;top:1024.5px;line-height:36px;font-size:28.6px;color:#161a2e;white-space:pre;left:1625.3px;letter-spacing:-0.094px;">English, French, Spanish</div>
<svg style="position:absolute;left:0;top:0;overflow:visible;pointer-events:none;" width="2920" height="1594" viewBox="0 0 2920 1594"><circle cx="2133" cy="1006.2" r="4.3" fill="#161a2e"/></svg>
<div style="position:absolute;top:988.5px;line-height:36px;font-size:28.6px;color:#161a2e;white-space:pre;left:2160.0px;letter-spacing:0.293px;">Experience working with databases</div>
<div style="position:absolute;top:1070.5px;line-height:38px;font-size:30px;color:#161a2e;white-space:pre;left:1594.0px;font-weight:700;letter-spacing:-0.098px;">Experience:</div>
<svg style="position:absolute;left:0;top:0;overflow:visible;pointer-events:none;" width="2920" height="1594" viewBox="0 0 2920 1594"><circle cx="1599.7" cy="1134.2" r="4.3" fill="#161a2e"/></svg>
<div style="position:absolute;top:1116.5px;line-height:36px;font-size:28.6px;color:#161a2e;white-space:pre;left:1625.3px;letter-spacing:-0.133px;">Content and Growth Marketer, WorkSafe, Victoria, AUS (Jan, 2016 - Present)</div>
<svg style="position:absolute;left:0;top:0;overflow:visible;pointer-events:none;" width="2920" height="1594" viewBox="0 0 2920 1594"><circle cx="1638" cy="1170.2" r="3.2" fill="#161a2e"/></svg>
<div style="position:absolute;top:1152.5px;line-height:36px;font-size:28.6px;color:#161a2e;white-space:pre;left:1657.5px;letter-spacing:0.000px;">Company Branding in-charge in the USA, Canada, and other overseas</div>
<div style="position:absolute;top:1188.5px;line-height:36px;font-size:28.6px;color:#161a2e;white-space:pre;left:1657.5px;letter-spacing:0.661px;">countries</div>
<svg style="position:absolute;left:0;top:0;overflow:visible;pointer-events:none;" width="2920" height="1594" viewBox="0 0 2920 1594"><circle cx="1638" cy="1254.2" r="3.2" fill="#161a2e"/></svg>
<div style="position:absolute;top:1236.5px;line-height:36px;font-size:28.6px;color:#161a2e;white-space:pre;left:1657.5px;letter-spacing:0.595px;">Complete concept testing for new products</div>
<div style="position:absolute;left:1580px;top:1280px;width:1060px;height:28.3px;overflow:hidden;"><div style="position:absolute;left:-1580px;top:-1280px;">
<svg style="position:absolute;left:0;top:0;overflow:visible;pointer-events:none;" width="2920" height="1594" viewBox="0 0 2920 1594"><circle cx="1638" cy="1302.2" r="3.2" fill="#161a2e"/></svg>
<div style="position:absolute;top:1284.5px;line-height:36px;font-size:28.6px;color:#161a2e;white-space:pre;left:1657.5px;letter-spacing:0.386px;">Design/evaluate, and critique creative ideas/output company</div>
</div></div>
<div style="position:absolute;left:1593.8px;top:1332.0px;width:1034.6px;height:143.4px;box-sizing:border-box;background:#fef7e8;border:2px solid #f4d88e;border-radius:16px;"></div>
<div style="position:absolute;top:1351.0px;line-height:36px;font-size:28.6px;color:#161a2e;white-space:pre;left:1611.0px;font-weight:700;letter-spacing:-0.473px;">Disclaimer:</div>
<div style="position:absolute;top:1351.0px;line-height:36px;font-size:28.6px;color:#161a2e;white-space:pre;left:1760.5px;letter-spacing:0.032px;">Zia uses advanced AI to generate summaries, but it may</div>
<div style="position:absolute;top:1387.0px;line-height:36px;font-size:28.6px;color:#161a2e;white-space:pre;left:1611.0px;letter-spacing:0.308px;">sometimes produce inaccurate, biased, or inappropriate content. Please</div>
<div style="position:absolute;top:1423.0px;line-height:36px;font-size:28.6px;color:#161a2e;white-space:pre;left:1611.0px;letter-spacing:0.246px;">review the output before use.</div>
<div style="position:absolute;left:1338.0px;top:660.0px;width:156.0px;height:54.0px;box-sizing:border-box;background:#1b2340;border-radius:6px;"></div>
<div style="position:absolute;top:666.8px;line-height:36px;font-size:29px;color:#fff;white-space:pre;left:1346.0px;letter-spacing:1.633px;-webkit-text-stroke:0.4px #fff;">Summary</div>
<svg style="position:absolute;left:0;top:0;overflow:visible;pointer-events:none;" width="2920" height="1594" viewBox="0 0 2920 1594"><g>
<path d="M1512.3 661 C1510.8 651.5 1522.3 650.5 1523.6 659.5 L1527.8 685.5 C1528 667.5 1541 668 1541.5 677 L1542 687.5 C1542.3 670.5 1554.3 671 1555 680 L1555.5 690 C1556 675 1566 676.5 1566 686.5 L1566 700 C1566 708.5 1560 712.5 1557.3 722.5 L1546 722.5 L1543.3 716.5 L1538.5 722.8 L1523.5 722.8 C1519.5 713 1508 700.5 1501 692.5 C1496 686 1502.5 679.5 1508.5 684 L1517.8 692 Z" fill="#fff" stroke="#000" stroke-width="4.2" stroke-linejoin="round"/>
<path d="M1532 694.5V709M1540.8 694.5V709M1549.6 694.5V709" stroke="#000" stroke-width="3.2" stroke-linecap="round"/>
</g></svg>
<!-- p_bottom -->
<div style="position:absolute;left:16.0px;top:1513.8px;width:2880.0px;height:56.2px;box-sizing:border-box;background:#fff;border-top:1.8px solid #c6ccdb;box-shadow:0 -3px 10px rgba(40,50,90,.07);"></div>
<div style="position:absolute;left:16.0px;top:1516.0px;width:581.0px;height:54.0px;box-sizing:border-box;background:#fff;border-right:1.5px solid #d8dce6;box-shadow:3px 0 8px rgba(0,0,0,.10);"></div>
<svg style="position:absolute;left:0;top:0;overflow:visible;pointer-events:none;" width="2920" height="1594" viewBox="0 0 2920 1594"><circle cx="117" cy="1531.5" r="4.5" fill="none" stroke="#5f6b85" stroke-width="1.6"/></svg>
<svg style="position:absolute;left:0;top:0;overflow:visible;pointer-events:none;" width="2920" height="1594" viewBox="0 0 2920 1594"><g fill="none" stroke="#5f6b85" stroke-width="1.7" stroke-linejoin="round" stroke-linecap="round"><path d="M295 1549 V1531 Q295 1528 298 1528 H314 Q317 1528 317 1531 V1542 Q317 1545 314 1545 H301 Z"/><path d="M300.5 1534H311.5M300.5 1539H307"/></g></svg>
<div style="position:absolute;top:1551.0px;line-height:19px;font-size:15.5px;color:#5f6b85;white-space:pre;left:284.8px;letter-spacing:0.342px;">Chats</div>
<svg style="position:absolute;left:0;top:0;overflow:visible;pointer-events:none;" width="2920" height="1594" viewBox="0 0 2920 1594"><g fill="none" stroke="#5f6b85" stroke-width="1.7" stroke-linecap="round"><circle cx="493.5" cy="1534" r="4.3"/><path d="M486.5 1546 C486.5 1541.5 490 1541 493.5 1541 C497 1541 500.5 1541.5 500.5 1546 C500.5 1548.5 486.5 1548.5 486.5 1546Z"/><circle cx="507" cy="1535.5" r="3"/><path d="M504.5 1541 C509 1540.5 512 1541.5 512 1544.5 C512 1546 509 1546.3 505 1546.2"/></g></svg>
<div style="position:absolute;top:1551.0px;line-height:19px;font-size:15.5px;color:#5f6b85;white-space:pre;left:465.5px;letter-spacing:0.792px;">Contacts</div>
<div style="position:absolute;left:16.0px;top:1528.0px;width:222.0px;height:42.0px;box-sizing:border-box;background:#1f1f1f;border-radius:0 7px 0 0;"></div>
<div style="position:absolute;top:1534.7px;line-height:29px;font-size:23.5px;color:#d6d6d6;white-space:pre;left:26.5px;letter-spacing:0.966px;">javascript:void(0)</div>
<div style="position:absolute;left:2115.7px;top:1516.0px;width:1.6px;height:54.0px;box-sizing:border-box;background:#d3d7e2;"></div>
<div style="position:absolute;left:2169.2px;top:1516.0px;width:1.6px;height:54.0px;box-sizing:border-box;background:#d3d7e2;"></div>
<svg style="position:absolute;left:0;top:0;overflow:visible;pointer-events:none;" width="2920" height="1594" viewBox="0 0 2920 1594"><g fill="none" stroke="#4a5070" stroke-width="1.7" stroke-linejoin="round"><path d="M2128 1554.8 L2143.6 1527 L2159.2 1554.8 Z"/></g><path d="M2144 1538V1547" stroke="#4a5070" stroke-width="1.7"/><circle cx="2144" cy="1551" r="1.2" fill="#4a5070"/><circle cx="2153.5" cy="1531" r="17" fill="#fdeeee" fill-opacity=".45" stroke="#f5c2c0" stroke-width="1.2"/><circle cx="2153.5" cy="1531" r="8.3" fill="#e83a33"/></svg>
<svg style="position:absolute;left:0;top:0;overflow:visible;pointer-events:none;" width="2920" height="1594" viewBox="0 0 2920 1594"><circle cx="2206.6" cy="1542.7" r="15" fill="none" stroke="#3d4566" stroke-width="1.7"/></svg>
<div style="position:absolute;top:1529.3px;line-height:28px;font-size:22px;color:#3d4566;white-space:pre;left:2200.4px;">?</div>
<div style="position:absolute;top:1525.5px;line-height:35px;font-size:28px;color:#13172b;white-space:pre;left:2240.0px;letter-spacing:0.183px;-webkit-text-stroke:0.4px #13172b;">Build Details</div>
<svg style="position:absolute;left:0;top:0;overflow:visible;pointer-events:none;" width="2920" height="1594" viewBox="0 0 2920 1594"><g fill="none" stroke="#3d4566" stroke-width="1.7" stroke-linejoin="round"><rect x="2433.5" y="1527.5" width="42.5" height="23.5" rx="2.5"/><path d="M2439 1557H2470.5"/><path d="M2449.5 1532.5 L2452 1543 L2455 1540 L2459 1544 L2460.5 1542.5 L2456.5 1538.5 L2459.5 1536 Z" stroke-width="1.3"/></g></svg>
<svg style="position:absolute;left:0;top:0;overflow:visible;pointer-events:none;" width="2920" height="1594" viewBox="0 0 2920 1594"><g fill="none" stroke="#3d4566" stroke-width="1.8" stroke-linecap="round" stroke-linejoin="round"><path d="M2509.5 1543 A13 13 0 1 0 2513 1531.5"/><path d="M2506.5 1539 L2509.5 1543.5 L2514 1540.5"/><path d="M2521.5 1534V1542.5H2529"/></g></svg>
<div style="position:absolute;left:2551.2px;top:1516.0px;width:1.6px;height:54.0px;box-sizing:border-box;background:#d3d7e2;"></div>
<svg style="position:absolute;left:0;top:0;overflow:visible;pointer-events:none;" width="2920" height="1594" viewBox="0 0 2920 1594"><circle cx="2589" cy="1542.7" r="15" fill="none" stroke="#3d4566" stroke-width="1.7"/></svg>
<div style="position:absolute;top:1529.3px;line-height:28px;font-size:22px;color:#3d4566;white-space:pre;left:2582.8px;">?</div>
<div style="position:absolute;top:1525.5px;line-height:35px;font-size:28px;color:#13172b;white-space:pre;left:2622.7px;letter-spacing:0.189px;-webkit-text-stroke:0.4px #13172b;">Need Help</div>
<div style="position:absolute;left:2777.9px;top:1516.0px;width:1.6px;height:54.0px;box-sizing:border-box;background:#d3d7e2;"></div>
<svg style="position:absolute;left:0;top:0;overflow:visible;pointer-events:none;" width="2920" height="1594" viewBox="0 0 2920 1594"><g fill="none" stroke="#3d4566" stroke-width="1.7" stroke-linejoin="round"><path d="M2800 1534 L2802 1530.5 H2818 Q2821 1530.5 2820.5 1533.5 L2818 1550"/><rect x="2796.5" y="1534.5" width="19" height="19.5" rx="3"/><path d="M2801 1541.5H2811M2801 1546.5H2807"/></g></svg>
<div style="position:absolute;left:2837.7px;top:1516.0px;width:1.6px;height:54.0px;box-sizing:border-box;background:#d3d7e2;"></div>
<svg style="position:absolute;left:0;top:0;overflow:visible;pointer-events:none;" width="2920" height="1594" viewBox="0 0 2920 1594"><g fill="none" stroke="#2f3454" stroke-width="3.3" stroke-linecap="round"><circle cx="2866" cy="1541.5" r="11.3"/><path d="M2875 1550.5 L2881 1556.5" stroke-width="4"/></g></svg>
<div style="position:absolute;left:2897.0px;top:128.0px;width:43.0px;height:1472.0px;box-sizing:border-box;background:#888;box-shadow:0 0 11px rgba(60,70,110,.42);"></div>
</div></div>
</body></html>
